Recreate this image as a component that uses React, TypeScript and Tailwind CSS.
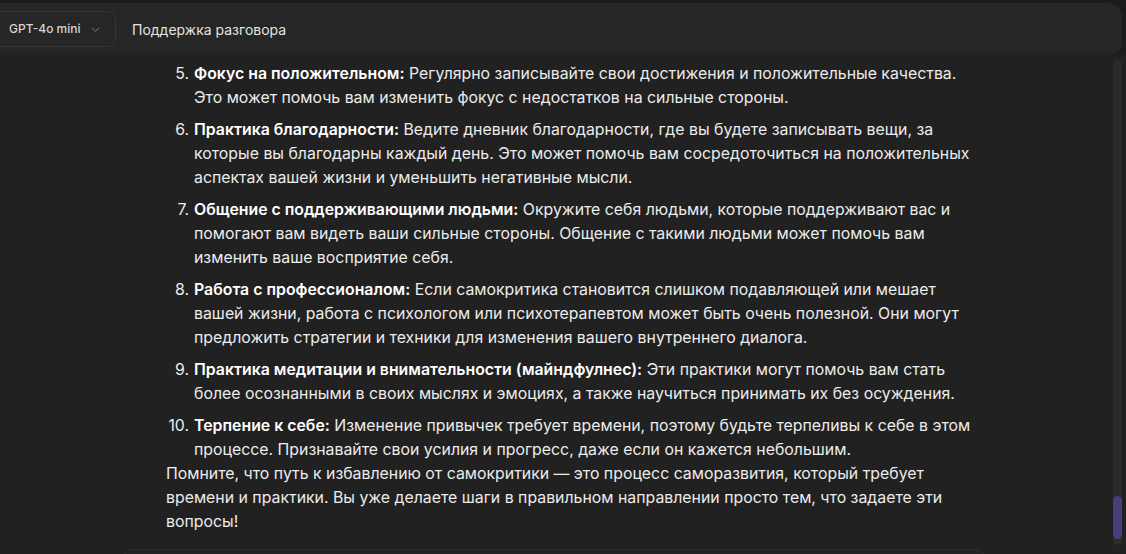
import React from 'react';

type Item = { n: number; title: string; text: string };

const items: Item[] = [
  {
    n: 5,
    title: 'Фокус на положительном',
    text: ' Регулярно записывайте свои достижения и положительные качества. Это может помочь вам изменить фокус с недостатков на сильные стороны.',
  },
  {
    n: 6,
    title: 'Практика благодарности',
    text: ' Ведите дневник благодарности, где вы будете записывать вещи, за которые вы благодарны каждый день. Это может помочь вам сосредоточиться на положительных аспектах вашей жизни и уменьшить негативные мысли.',
  },
  {
    n: 7,
    title: 'Общение с поддерживающими людьми',
    text: ' Окружите себя людьми, которые поддерживают вас и помогают вам видеть ваши сильные стороны. Общение с такими людьми может помочь вам изменить ваше восприятие себя.',
  },
  {
    n: 8,
    title: 'Работа с профессионалом',
    text: ' Если самокритика становится слишком подавляющей или мешает вашей жизни, работа с психологом или психотерапевтом может быть очень полезной. Они могут предложить стратегии и техники для изменения вашего внутреннего диалога.',
  },
  {
    n: 9,
    title: 'Практика медитации и внимательности (майндфулнес)',
    text: ' Эти практики могут помочь вам стать более осознанными в своих мыслях и эмоциях, а также научиться принимать их без осуждения.',
  },
  {
    n: 10,
    title: 'Терпение к себе',
    text: ' Изменение привычек требует времени, поэтому будьте терпеливы к себе в этом процессе. Признавайте свои усилия и прогресс, даже если он кажется небольшим.',
  },
];

export default function App() {
  return (
    <div className="h-[554px] w-[1126px] overflow-hidden bg-[#1c1c1c] font-['Inter','Liberation_Sans',sans-serif] text-[#ececec] flex flex-col">
      {/* Header */}
      <div className="mt-[3px] mr-[4px] h-[52px] shrink-0 rounded-r-[14px] bg-[#262626] flex items-center">
        <button className="ml-[-10px] h-[36px] w-[126px] rounded-[8px] border border-[#353535] flex items-center pl-[18px] gap-[9px] text-[12px] font-medium text-[#d4d4d4]">
          <span>GPT-4o mini</span>
          <svg width="11" height="11" viewBox="0 0 24 24" fill="none" stroke="#8a8a8a" strokeWidth="2" strokeLinecap="round" strokeLinejoin="round">
            <path d="M5 9l7 7 7-7" />
          </svg>
        </button>
        <div className="ml-[16px] text-[14px] text-[#e3e3e3]">Поддержка разговора</div>
      </div>

      {/* Body */}
      <div className="flex-1 flex bg-[#212121] min-h-0">
        <div className="flex-1 relative min-w-0">
          <div className="ml-[166px] w-[812px] pt-[7px] text-[15.85px] leading-[24px]">
            <ol className="flex flex-col gap-[8px]">
              {items.map(it => (
                <li key={it.n} className="flex">
                  <span className="w-[28px] shrink-0 text-right pr-[5px]">{it.n}.</span>
                  <span className="flex-1">
                    <b className="font-semibold text-white">{it.title}:</b>{it.text}
                  </span>
                </li>
              ))}
            </ol>
            <p>
              Помните, что путь к избавлению от самокритики — это процесс саморазвития, который требует времени и практики. Вы уже делаете шаги в правильном направлении просто тем, что задаете эти вопросы!
            </p>
          </div>
          {/* input box top */}
          <div className="absolute left-[118px] top-[494px] w-[872px] h-[40px] rounded-t-[18px] border-t border-[#303030] bg-[#232323]" />
        </div>
        {/* scrollbar */}
        <div className="w-[13px] shrink-0 pt-[5px] pb-[9px] pr-[4px]">
          <div className="h-full w-[9px] rounded-full bg-[#2b2b2b] flex flex-col justify-end pb-[6px]">
            <div className="h-[43px] w-[9px] rounded-full bg-[#45407a]" />
          </div>
        </div>
      </div>
    </div>
  );
}
